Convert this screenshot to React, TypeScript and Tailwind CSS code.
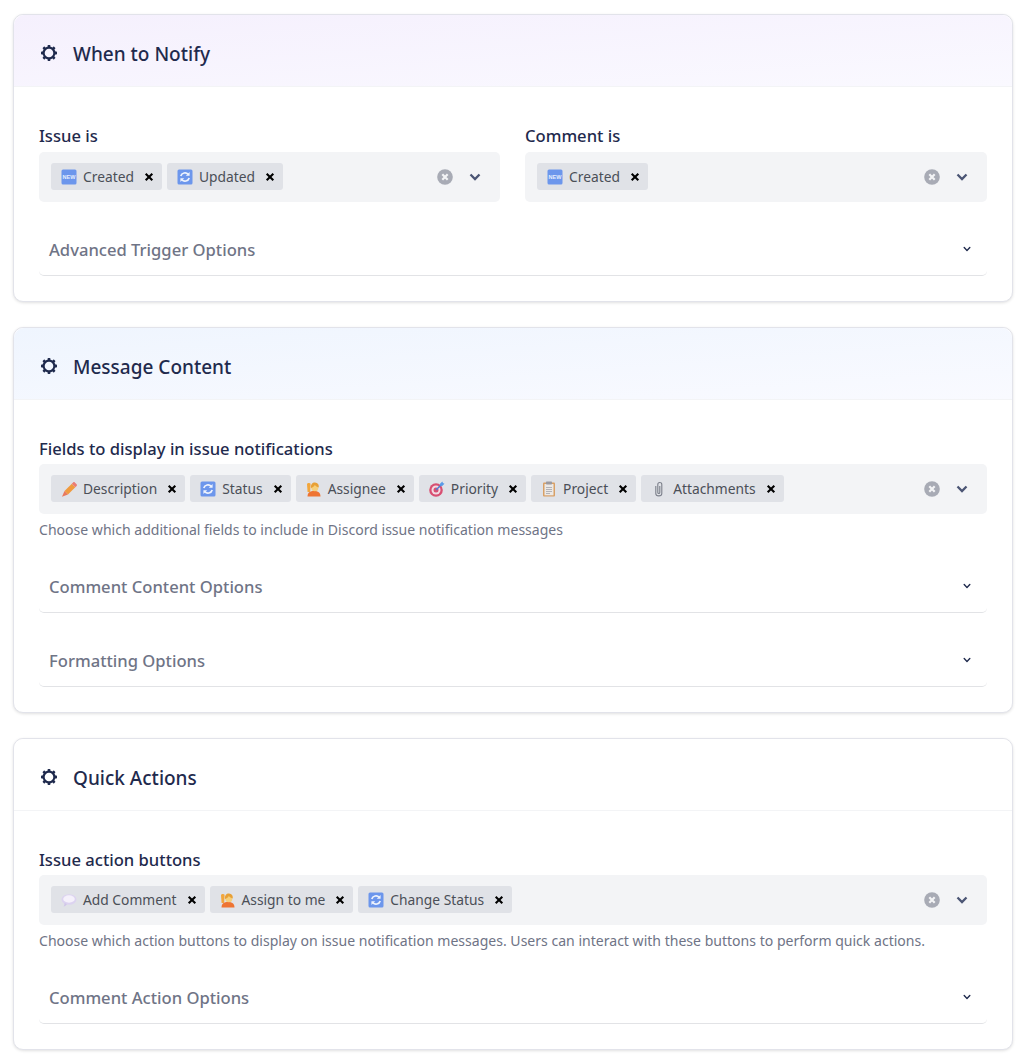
import React from 'react'
import { HiChevronDown } from 'react-icons/hi'

type TagIcon = 'new' | 'update' | 'pencil' | 'person' | 'target' | 'clipboard' | 'clip' | 'speech'

function GearIcon() {
    return (
        <svg width="18" height="18" viewBox="0 0 18 18" className="mb-[2px] shrink-0 text-[#1f2a4d]">
            <circle cx="9" cy="9" r="5.4" fill="none" stroke="currentColor" strokeWidth="2.2" />
            <g fill="currentColor">
                {[0, 45, 90, 135, 180, 225, 270, 315].map((a) => (
                    <rect key={a} x="7.6" y="1" width="2.8" height="3" rx="0.7" transform={`rotate(${a} 9 9)`} />
                ))}
            </g>
        </svg>
    )
}

function EmojiIcon({ icon }: { icon: TagIcon }) {
    return (
        <svg width="16" height="16" viewBox="0 0 16 16" className="shrink-0">
            {icon === 'new' && (
                <>
                    <rect x="0.5" y="0.5" width="15" height="15" rx="1.5" fill="#6c96ec" />
                    <text x="8" y="10" textAnchor="middle" fontSize="5.5" fontWeight="700" fill="#e6eefd" fontFamily="'Liberation Sans', sans-serif">NEW</text>
                </>
            )}
            {icon === 'update' && (
                <>
                    <rect x="0.5" y="0.5" width="15" height="15" rx="1.5" fill="#6c96ec" />
                    <path d="M3.8 7a4.3 4.3 0 0 1 7.4-1.6M12.2 9a4.3 4.3 0 0 1-7.4 1.6" fill="none" stroke="#eef3fd" strokeWidth="1.7" />
                    <path d="M12.6 3v3.8H8.8zM3.4 13V9.2h3.8z" fill="#eef3fd" />
                </>
            )}
            {icon === 'pencil' && (
                <>
                    <path d="M3.5 10 10.8 2.7l3.5 3.5L7 13.5z" fill="#f09a3e" />
                    <path d="M10.8 2.7l1.3-1.3c.5-.5 1.2-.5 1.7 0l1.8 1.8c.5.5.5 1.2 0 1.7l-1.3 1.3z" fill="#ea7c74" />
                    <path d="M3.5 10 7 13.5l-6 2.3z" fill="#e9795d" />
                </>
            )}
            {icon === 'person' && (
                <>
                    <path d="M1.5 15.5c0-3.800 2.500-5.500 6.500-5.500s6.500 1.700 6.500 5.500z" fill="#ee7433" />
                    <circle cx="8.8" cy="6.8" r="3.5" fill="#f6cf7a" />
                    <path d="M5 7C4.500 3.400 6.500 1.400 9 1.500c2.700.1 4.200 2.300 3.700 5-1.500-.4-3-1.500-3.900-2.500C8.200 5.200 6.800 6.400 5 7z" fill="#e8a035" />
                    <path d="M1.600 11 1 3.200C1 2 3.800 1.300 4.600 2.700L4.200 11z" fill="#f2a63c" />
                </>
            )}
            {icon === 'target' && (
                <>
                    <circle cx="7" cy="9" r="6.8" fill="#d84f72" />
                    <circle cx="7" cy="9" r="4.5" fill="#f2dbe3" />
                    <circle cx="7" cy="9" r="2.5" fill="#d84f72" />
                    <path d="M7 9 13 3" stroke="#4b7fd6" strokeWidth="1.4" />
                    <path d="M11 2.800 13.300.5l.7 1.500 1.500.7-2.300 2.300-2.200-.4z" fill="#5a9be8" />
                </>
            )}
            {icon === 'clipboard' && (
                <>
                    <rect x="2" y="1.5" width="12" height="14" rx="1" fill="#d8a066" />
                    <rect x="3.5" y="3" width="9" height="11.3" fill="#ece9e6" />
                    <rect x="5" y="0.5" width="6" height="3" rx="0.7" fill="#9b9aa0" />
                    <path d="M5 6.500h6M5 8.500h6M5 10.500h6M5 12.500h4" stroke="#a5a5ac" strokeWidth="0.8" />
                </>
            )}
            {icon === 'clip' && (
                <path d="M4.800 5v7.500c0 3.200 6 3.200 6 0V3.500C10.800 .8 6.800 .8 6.800 3.500v8c0 1.300 2 1.300 2 0V5" fill="none" stroke="#7b7f8a" strokeWidth="1.1" />
            )}
            {icon === 'speech' && (
                <>
                    <ellipse cx="8" cy="7.5" rx="7.5" ry="5.2" fill="#dcd3f0" />
                    <path d="M2.500 14.500c1.500-.2 2.700-1 3.300-2.400L3.500 11c.2 1.500-.2 2.500-1 3.500z" fill="#cfc4e8" />
                    <ellipse cx="8" cy="7" rx="5.8" ry="3.7" fill="#f5f1fb" />
                </>
            )}
        </svg>
    )
}

function RemoveIcon() {
    return (
        <svg width="10" height="10" viewBox="0 0 10 10" className="shrink-0">
            <path d="M1.700 1.700l6.600 6.600M8.300 1.700 1.700 8.300" stroke="#000" strokeWidth="2.1" />
        </svg>
    )
}

function Tag({ icon, label }: { icon: TagIcon; label: string }) {
    return (
        <div className="flex h-[27px] items-center rounded-[3px] bg-[#e0e2e7] pt-[1px] pr-[8px] pl-[10px] text-[13.8px] text-[#4b4f57]">
            <EmojiIcon icon={icon} />
            <span className="ml-[6px]">{label}</span>
            <span className="ml-[10px] flex w-[10px] justify-center">
                <RemoveIcon />
            </span>
        </div>
    )
}

function MultiSelect({ tags }: { tags: { icon: TagIcon; label: string }[] }) {
    return (
        <div className="flex h-[50px] items-center rounded-[5px] bg-[#f3f4f6] pr-[19px] pb-[1px] pl-[12px]">
            <div className="flex flex-1 gap-[5px]">
                {tags.map((t) => (
                    <Tag key={t.label} icon={t.icon} label={t.label} />
                ))}
            </div>
            <svg width="16" height="16" viewBox="0 0 16 16" className="mr-[16px]">
                <circle cx="8" cy="8" r="7.8" fill="#a8abb5" />
                <path d="M5.300 5.300l5.400 5.400M10.700 5.300l-5.400 5.400" stroke="#f3f4f6" strokeWidth="2.2" />
            </svg>
            <svg width="12" height="8" viewBox="0 0 12 8">
                <path d="M1.500 1.500 6 6l4.500-4.500" fill="none" stroke="#4b5574" strokeWidth="2.3" />
            </svg>
        </div>
    )
}

function Accordion({ title }: { title: string }) {
    return (
        <div className="flex h-[50px] items-center justify-between rounded-b-[5px] border-b border-[#e2e3e6] pr-[13px] pl-[10px] text-[16.6px] font-medium text-[#6f7486]">
            <span>{title}</span>
            <HiChevronDown className="mb-[4px] text-[14px] text-[#1f2a4d]" />
        </div>
    )
}

function Card({ title, bg, children }: { title: string; bg: string; children: React.ReactNode }) {
    return (
        <section className="rounded-[10px] border border-[#e2e3ea] bg-white shadow-[0_1px_3px_rgba(0,0,0,0.12)]">
            <header className={`flex h-[72px] items-center rounded-t-[10px] border-b border-[#f3f4f6] pt-[7px] pl-[26px] ${bg}`}>
                <GearIcon />
                <h2 className="ml-[15px] text-[19px] font-medium text-[#1f2a4d]">{title}</h2>
            </header>
            <div className="px-[25px] pt-[37px] pb-[25px]">{children}</div>
        </section>
    )
}

function Label({ children }: { children: React.ReactNode }) {
    return <div className="mb-[3px] text-[16.6px] leading-[24px] font-medium text-[#1f2a4d]">{children}</div>
}

function Help({ children }: { children: React.ReactNode }) {
    return <p className="mt-[4px] text-[14.05px] leading-[24px] text-[#6f7486]">{children}</p>
}

export default function App() {
    return (
        <div className="flex flex-col gap-[25px] bg-white pt-[14px] pr-[11px] pb-[14px] pl-[13px] font-['Noto_Sans',sans-serif]">
            <Card title="When to Notify" bg="bg-gradient-to-br from-[#f5f0fd] to-[#faf9ff]">
                <div className="grid grid-cols-[461px_1fr] gap-[25px]">
                    <div className="flex flex-col gap-[1px]">
                        <div>
                            <Label>Issue is</Label>
                        </div>
                        <MultiSelect tags={[{ icon: 'new', label: 'Created' }, { icon: 'update', label: 'Updated' }]} />
                    </div>
                    <div className="flex flex-col gap-[1px]">
                        <div>
                            <Label>Comment is</Label>
                        </div>
                        <MultiSelect tags={[{ icon: 'new', label: 'Created' }]} />
                    </div>
                </div>
                <div className="mt-[24px]">
                    <Accordion title="Advanced Trigger Options" />
                </div>
            </Card>
            <Card title="Message Content" bg="bg-gradient-to-br from-[#eff5fe] to-[#f9faff]">
                <Label>Fields to display in issue notifications</Label>
                <MultiSelect
                    tags={[
                        { icon: 'pencil', label: 'Description' },
                        { icon: 'update', label: 'Status' },
                        { icon: 'person', label: 'Assignee' },
                        { icon: 'target', label: 'Priority' },
                        { icon: 'clipboard', label: 'Project' },
                        { icon: 'clip', label: 'Attachments' },
                    ]}
                />
                <Help>Choose which additional fields to include in Discord issue notification messages</Help>
                <div className="mt-[21px] flex flex-col gap-[24px]">
                    <Accordion title="Comment Content Options" />
                    <Accordion title="Formatting Options" />
                </div>
            </Card>
            <Card title="Quick Actions" bg="bg-white">
                <Label>Issue action buttons</Label>
                <MultiSelect
                    tags={[
                        { icon: 'speech', label: 'Add Comment' },
                        { icon: 'person', label: 'Assign to me' },
                        { icon: 'update', label: 'Change Status' },
                    ]}
                />
                <Help>Choose which action buttons to display on issue notification messages. Users can interact with these buttons to perform quick actions.</Help>
                <div className="mt-[21px]">
                    <Accordion title="Comment Action Options" />
                </div>
            </Card>
        </div>
    )
}
